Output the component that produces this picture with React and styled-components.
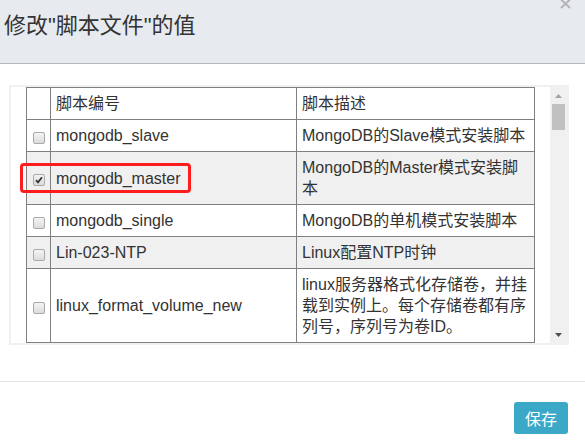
import React from "react";
import styled, {createGlobalStyle} from "styled-components";

const GlobalStyle = createGlobalStyle`
  html, body {
    margin: 0;
    padding: 0;
    background: #fff;
  }
  body {
    font-family: "Liberation Sans", "Noto Sans CJK SC", sans-serif;
    color: #333;
  }
`;

const Dialog = styled.div`
  width: 585px;
  height: 441px;
  display: flex;
  flex-direction: column;
  background: #fff;
  overflow: hidden;
`;

const Header = styled.div`
  height: 63px;
  display: flex;
  justify-content: space-between;
  align-items: flex-start;
  background: #e7ebef;
  border-bottom: 1px solid #b3b8bd;
  padding-left: 4px;
`;

const Title = styled.h4`
  margin: 14px 0 0;
  font-size: 22px;
  line-height: 24px;
  font-weight: normal;
  color: #333;
`;

const Close = styled.button`
  border: 0;
  background: none;
  padding: 0;
  margin: -1px 14px 0 0;
  width: 11px;
  height: 10px;
  display: flex;
  color: #b4b4b4;
`;

const Body = styled.div`
  padding: 21px 16px 36px 9px;
`;

const Frame = styled.div`
  position: relative;
  display: flex;
  border: 2px solid #f0f0f0;
  border-right: 0;
  background: #f0f0f0;
`;

const Viewport = styled.div`
  flex: 1;
  background: #fff;
  padding-left: 15px;
  padding-right: 16px;
  overflow: hidden;
`;

const Table = styled.table`
  border-collapse: collapse;
  table-layout: fixed;
  width: 509px;
  font-size: 16px;
  line-height: 21px;
  color: #333;
`;

const Cell = styled.td`
  border: 1px solid #808080;
  padding: ${({$center}) => ($center ? "5px 0" : "5px 3px 5px 5px")};
  vertical-align: middle;
  text-align: ${({$center}) => ($center ? "center" : "left")};
  background: ${({$shaded}) => ($shaded ? "#f0f0f0" : "#fff")};
`;

const Row = styled.tr``;

const Box = styled.span`
  display: inline-flex;
  align-items: center;
  justify-content: center;
  width: 12px;
  height: 12px;
  box-sizing: border-box;
  border: 1px solid #a9a9a9;
  border-radius: 2px;
  background: linear-gradient(#f4f4f4, #dcdcdc);
  vertical-align: middle;
  margin-top: 2px;
`;

const Scrollbar = styled.div`
  width: 17px;
  display: flex;
  flex-direction: column;
  background: #f0f0f0;
  border-right: 2px solid #f0f0f0;
`;

const Arrow = styled.div`
  height: 17px;
  display: flex;
  align-items: center;
  justify-content: center;
  color: ${({$active}) => ($active ? "#505050" : "#a3a3a3")};
`;

const Thumb = styled.div`
  height: 26px;
  margin: 0 2px;
  background: #c1c1c1;
`;

const Track = styled.div`
  flex: 1;
`;

const Highlight = styled.div`
  position: absolute;
  left: 9px;
  top: 76px;
  width: 171px;
  height: 30px;
  box-sizing: border-box;
  border: 3px solid #ff1c1c;
  border-radius: 4px;
  pointer-events: none;
`;

const Footer = styled.div`
  border-top: 1px solid #e5e5e5;
  display: flex;
  justify-content: flex-end;
  padding: 20px 17px 0 0;
`;

const SaveButton = styled.button`
  height: 32px;
  padding: 0 11px;
  border: 0;
  border-radius: 3px;
  background: #3aa8c6;
  color: #fff;
  font-family: "Liberation Sans", "Noto Sans CJK SC", sans-serif;
  font-size: 16px;
`;

const rows = [
    {id: "mongodb_slave", desc: "MongoDB的Slave模式安装脚本"},
    {id: "mongodb_master", desc: "MongoDB的Master模式安装脚本", checked: true, shaded: true},
    {id: "mongodb_single", desc: "MongoDB的单机模式安装脚本"},
    {id: "Lin-023-NTP", desc: "Linux配置NTP时钟", shaded: true},
    {id: "linux_format_volume_new", desc: "linux服务器格式化存储卷，并挂载到实例上。每个存储卷都有序列号，序列号为卷ID。"},
];

function Checkbox({checked}) {
    return (
        <Box>
            {checked && (
                <svg width="8" height="8" viewBox="0 0 8 8">
                    <path d="M1 4.2 L3 6.3 L7 1.2" fill="none" stroke="#333" strokeWidth="1.8"/>
                </svg>
            )}
        </Box>
    );
}

export default function App() {
    return (
        <Dialog>
            <GlobalStyle/>
            <Header>
                <Title>修改"脚本文件"的值</Title>
                <Close aria-label="close">
                    <svg width="11" height="10" viewBox="0 0 11 10">
                        <path d="M1 0.5 L10 9 M10 0.5 L1 9" stroke="currentColor" strokeWidth="2"/>
                    </svg>
                </Close>
            </Header>
            <Body>
                <Frame>
                    <Viewport>
                        <Table>
                            <colgroup>
                                <col style={{width: 24}}/>
                                <col style={{width: 246}}/>
                                <col style={{width: 238}}/>
                            </colgroup>
                            <tbody>
                                <Row>
                                    <Cell $center/>
                                    <Cell>脚本编号</Cell>
                                    <Cell>脚本描述</Cell>
                                </Row>
                                {rows.map((r) => (
                                    <Row key={r.id}>
                                        <Cell $center $shaded={r.shaded}>
                                            <Checkbox checked={r.checked}/>
                                        </Cell>
                                        <Cell $shaded={r.shaded}>{r.id}</Cell>
                                        <Cell $shaded={r.shaded}>{r.desc}</Cell>
                                    </Row>
                                ))}
                            </tbody>
                        </Table>
                    </Viewport>
                    <Scrollbar>
                        <Arrow>
                            <svg width="7" height="4" viewBox="0 0 7 4"><path d="M0 4 L3.5 0 L7 4 Z" fill="currentColor"/></svg>
                        </Arrow>
                        <Thumb/>
                        <Track/>
                        <Arrow $active>
                            <svg width="7" height="4" viewBox="0 0 7 4"><path d="M0 0 L7 0 L3.5 4 Z" fill="currentColor"/></svg>
                        </Arrow>
                    </Scrollbar>
                    <Highlight/>
                </Frame>
            </Body>
            <Footer>
                <SaveButton>保存</SaveButton>
            </Footer>
        </Dialog>
    );
}
